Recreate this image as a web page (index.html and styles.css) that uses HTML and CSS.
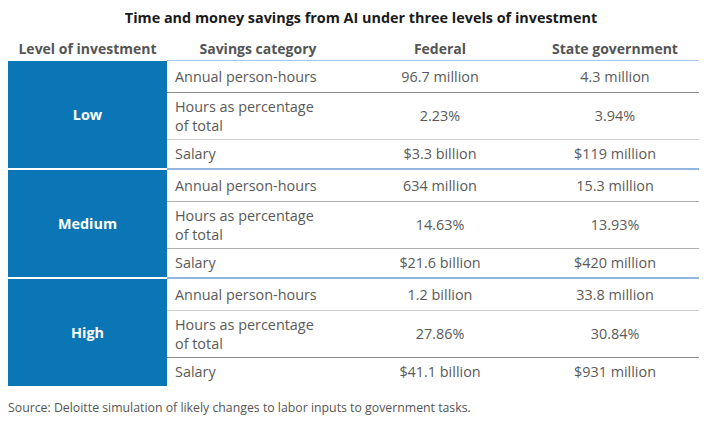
FILE: index.html
```html
<!DOCTYPE html>
<html>
<head>
<meta charset="utf-8">
<link rel="stylesheet" href="styles.css">
</head>
<body>
<div class="page">
  <h1 class="title">Time and money savings from AI under three levels of investment</h1>
  <table class="savings">
    <colgroup>
      <col class="c-level"><col class="c-cat"><col class="c-fed"><col class="c-state">
    </colgroup>
    <thead>
      <tr>
        <th class="h-level">Level of investment</th>
        <th class="h-line">Savings category</th>
        <th class="h-line">Federal</th>
        <th class="h-line">State government</th>
      </tr>
    </thead>
    <tbody>
      <tr class="r1 first-group">
        <td class="level" rowspan="3">Low</td>
        <td class="cat dark">Annual person-hours</td>
        <td class="val dark">96.7 million</td>
        <td class="val dark">4.3 million</td>
      </tr>
      <tr class="r2">
        <td class="cat light">Hours as percentage<br>of total</td>
        <td class="val light">2.23%</td>
        <td class="val light">3.94%</td>
      </tr>
      <tr class="r3">
        <td class="cat">Salary</td>
        <td class="val">$3.3 billion</td>
        <td class="val">$119 million</td>
      </tr>

      <tr class="r1 group">
        <td class="level" rowspan="3">Medium</td>
        <td class="cat mid">Annual person-hours</td>
        <td class="val mid">634 million</td>
        <td class="val mid">15.3 million</td>
      </tr>
      <tr class="r2">
        <td class="cat mid">Hours as percentage<br>of total</td>
        <td class="val mid">14.63%</td>
        <td class="val mid">13.93%</td>
      </tr>
      <tr class="r3">
        <td class="cat">Salary</td>
        <td class="val">$21.6 billion</td>
        <td class="val">$420 million</td>
      </tr>

      <tr class="r1 group">
        <td class="level" rowspan="3">High</td>
        <td class="cat light">Annual person-hours</td>
        <td class="val light">1.2 billion</td>
        <td class="val light">33.8 million</td>
      </tr>
      <tr class="r2">
        <td class="cat dark">Hours as percentage<br>of total</td>
        <td class="val dark">27.86%</td>
        <td class="val dark">30.84%</td>
      </tr>
      <tr class="r3">
        <td class="cat">Salary</td>
        <td class="val">$41.1 billion</td>
        <td class="val">$931 million</td>
      </tr>
    </tbody>
  </table>
  <p class="source">Source: Deloitte simulation of likely changes to labor inputs to government tasks.</p>
</div>
</body>
</html>
```
FILE: styles.css
```css
html, body {
  margin: 0;
  padding: 0;
  background: #ffffff;
}

.page {
  width: 720px;
  padding: 0 8px;
  box-sizing: border-box;
  font-family: "Open Sans", "Liberation Sans", sans-serif;
  color: #555555;
}

.title {
  margin: 8px 0 0 0;
  font-size: 14.4px;
  line-height: 20px;
  font-weight: 700;
  color: #1a1a1a;
  text-align: center;
  padding-left: 2px;
}

.savings {
  margin-top: 9px;
  width: 691px;
  table-layout: fixed;
  border-collapse: separate;
  border-spacing: 0;
  font-size: 14.4px;
}

.c-level { width: 159px; }
.c-cat { width: 182px; }
.c-fed { width: 182px; }
.c-state { width: 168px; }

.savings th {
  height: 23px;
  padding: 0;
  font-size: 14px;
  font-weight: 700;
  color: #555555;
  vertical-align: middle;
  text-align: center;
  line-height: 18px;
}

.h-level {
  text-align: left;
}

.h-line {
  border-bottom: 1px solid #a9c7e8;
}

.savings td {
  padding: 0;
  vertical-align: middle;
  line-height: 18px;
  color: #5a5a5a;
}

.level {
  background: #0b76b5;
  color: #ffffff !important;
  font-weight: 700;
  text-align: center;
}

.cat {
  padding-left: 8px !important;
  text-align: left;
}

.val {
  text-align: center;
}

.r1 td { height: 31px; }
.r2 td { height: 46px; }
.r3 td { height: 28px; }

.r2 .cat { line-height: 19px; }

.group td {
  border-top: 2px solid #92b7df;
}

.group td.level {
  border-top: 2px solid #ffffff;
}

.dark { border-bottom: 1px solid #8a8a8a; }
.mid { border-bottom: 1px solid #b0b0b0; }
.light { border-bottom: 1px solid #cdcdcd; }

.source {
  margin: 14px 0 0 0;
  font-size: 12.3px;
  line-height: 16px;
  color: #555555;
}
```
